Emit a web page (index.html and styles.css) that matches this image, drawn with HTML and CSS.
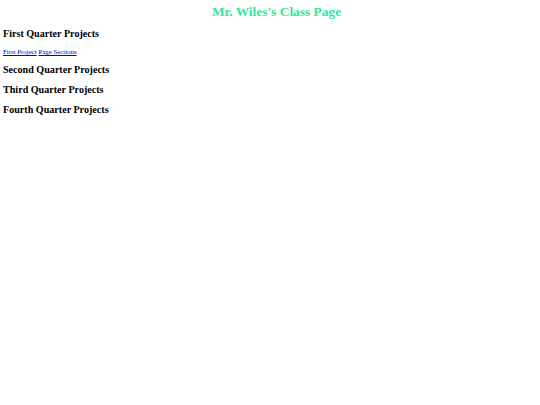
FILE: index.html
```html
<!DOCTYPE html>
<html>
<head>
<meta charset="utf-8">
<title>Mr. Wiles's Class Page</title>
<link rel="stylesheet" href="styles.css">
</head>
<body>
<h2 class="title">Mr. Wiles's Class Page</h2>
<h3 class="quarter">First Quarter Projects</h3>
<p class="links"><a href="#">First Project</a> <a href="#">Page Sections</a></p>
<h3 class="quarter">Second Quarter Projects</h3>
<h3 class="quarter">Third Quarter Projects</h3>
<h3 class="quarter">Fourth Quarter Projects</h3>
</body>
</html>
```
FILE: styles.css
```css
body {
  margin: 3px;
  font-family: "Liberation Serif", "Times New Roman", serif;
  background: #fff;
  color: #000;
}
.title {
  font-size: 13.4px;
  line-height: 15px;
  font-weight: bold;
  text-align: center;
  color: #33e699;
  margin: 1px 0 9px 13px;
}
.quarter {
  font-size: 10.1px;
  line-height: 12px;
  font-weight: bold;
  margin: 8px 0;
}
.links {
  font-size: 6.85px;
  line-height: 8px;
  margin: 8px 0;
}
.links a {
  color: #0000ee;
}
```
